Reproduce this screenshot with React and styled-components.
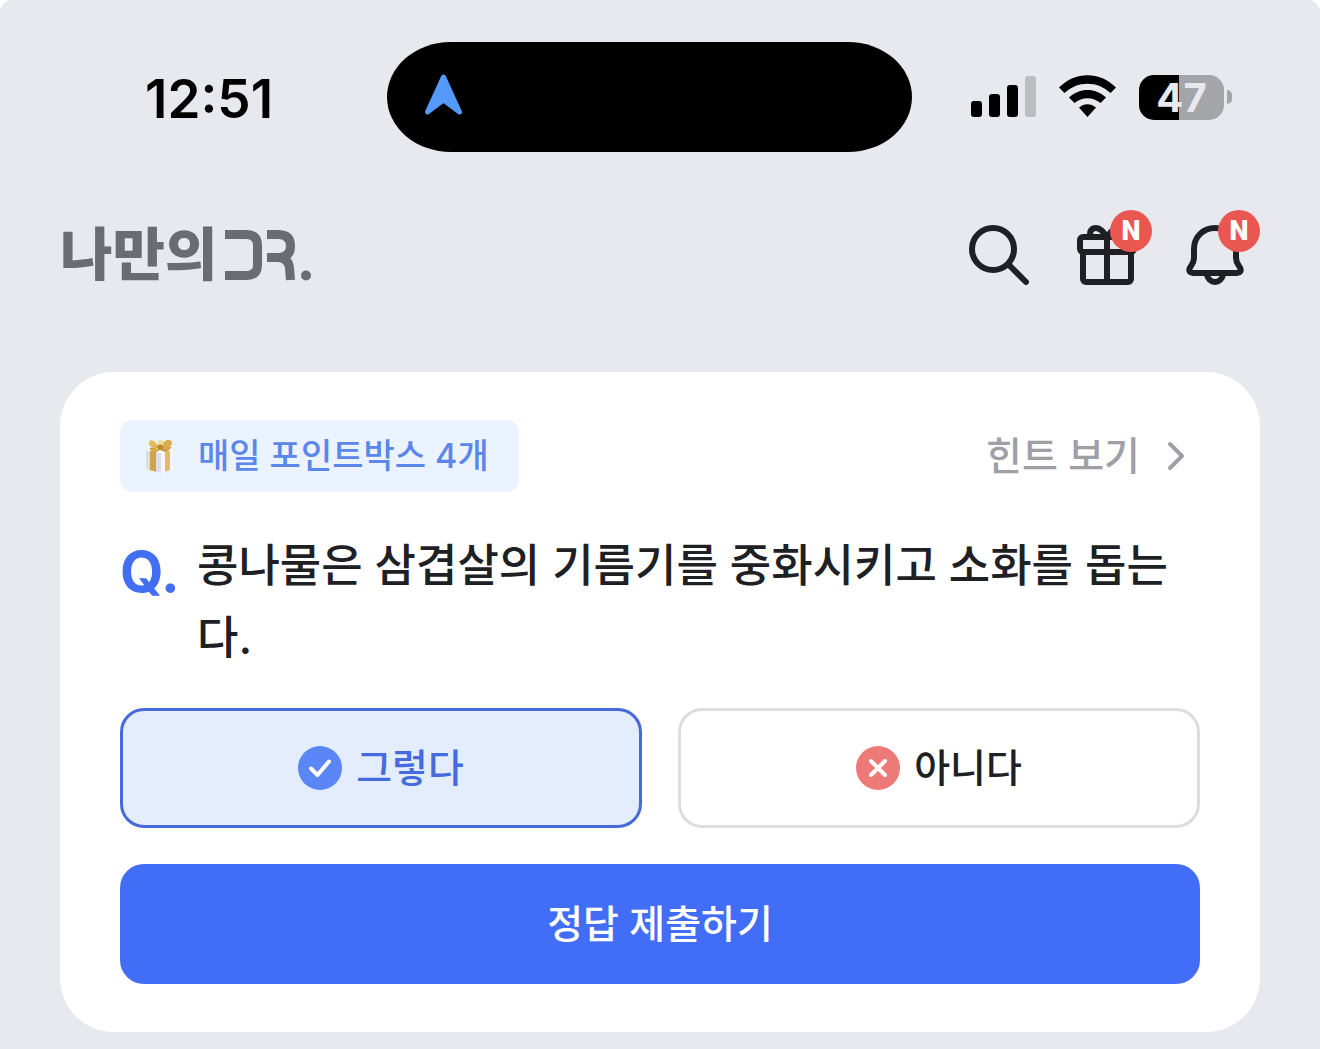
import React, { useState } from "react";
import styled, { createGlobalStyle } from "styled-components";

const GlobalStyle = createGlobalStyle`
  *, *::before, *::after { box-sizing: border-box; }
  body {
    margin: 0;
    background: #ffffff;
    color: #1f2024;
    font-family: Inter, "Noto Sans CJK KR", sans-serif;
    font-weight: 500;
  }
  button { font: inherit; cursor: pointer; }
  svg { display: block; flex: none; }
`;

const Screen = styled.div`
  min-height: 100vh;
  padding-bottom: 17px;
  background: #e8e9ee;
  border-radius: 12px 12px 0 0;
`;

const StatusBar = styled.div`
  display: grid;
  grid-template-columns: 1fr 525px 1fr;
  align-items: center;
  padding: 42px 88px 0 67px;
`;

const Clock = styled.time`
  padding: 3px 0 0 78px;
  color: #000000;
  font-size: 53px;
  font-weight: 600;
  line-height: 64px;
`;

const Island = styled.div`
  display: flex;
  align-items: center;
  height: 110px;
  padding-left: 36px;
  background: #000000;
  border-radius: 64px / 55px;
`;

const Indicators = styled.div`
  display: flex;
  align-items: center;
  justify-content: flex-end;
  gap: 23px;
`;

const Battery = styled.div`
  display: flex;
  align-items: center;
  gap: 3px;
`;

const BatteryBody = styled.div`
  width: 85px;
  height: 45px;
  border-radius: 15px;
  background: linear-gradient(
    to right,
    #000000 ${(p) => p.$level}%,
    #a4a5a9 ${(p) => p.$level}%
  );
  color: #e8e9ee;
  font-size: 40px;
  font-weight: 700;
  line-height: 45px;
  text-align: center;
`;

const BatteryTip = styled.div`
  width: 5px;
  height: 14px;
  border-radius: 0 5px 5px 0;
  background: #a4a5a9;
`;

const Header = styled.header`
  display: flex;
  align-items: center;
  justify-content: space-between;
  padding: 67px 69px 81px 60px;
`;

const Brand = styled.a`
  display: flex;
  align-items: center;
  gap: 8px;
  color: #6b6c72;
  font-size: 57px;
  font-weight: 900;
  line-height: 72px;
  text-decoration: none;
`;

const Actions = styled.nav`
  display: flex;
  gap: 36px;
`;

const IconButton = styled.button`
  position: relative;
  padding: 0;
  border: 0;
  background: none;
  color: #1f2024;
`;

const Badge = styled.span`
  position: absolute;
  top: -9px;
  right: -9px;
  width: 42px;
  height: 42px;
  border-radius: 50%;
  background: #ea5750;
  color: #ffffff;
  font-family: Roboto, sans-serif;
  font-size: 27px;
  font-weight: 900;
  line-height: 42px;
  text-align: center;
`;

const Card = styled.main`
  display: flex;
  flex-direction: column;
  gap: 36px;
  margin: 0 60px;
  padding: 48px 60px;
  border-radius: 54px;
  background: #ffffff;
`;

const CardTop = styled.div`
  display: flex;
  align-items: center;
  justify-content: space-between;
`;

const Chip = styled.div`
  display: flex;
  align-items: center;
  gap: 22px;
  padding: 0 30px 0 24px;
  border-radius: 12px;
  background: #eaf3ff;
  color: #5b86ea;
  font-size: 34px;
  line-height: 72px;
`;

const HintLink = styled.a`
  display: flex;
  align-items: center;
  gap: 12px;
  color: #9fa0a6;
  font-size: 39px;
  line-height: 72px;
  text-decoration: none;
`;

const Question = styled.div`
  display: grid;
  grid-template-columns: 60px 1fr;
  column-gap: 17px;
  padding-top: 2px;
  margin-bottom: -2px;
`;

const QuestionMark = styled.span`
  color: #416ef3;
  font-size: 56px;
  font-weight: 700;
  line-height: 84px;
`;

const QuestionText = styled.h1`
  margin: 0;
  font-size: 45px;
  font-weight: 500;
  line-height: 72px;
`;

const Choices = styled.div`
  display: grid;
  grid-template-columns: 1fr 1fr;
  gap: 36px;
`;

const Choice = styled.button`
  display: flex;
  align-items: center;
  justify-content: center;
  gap: 14px;
  height: 120px;
  border: 3px solid ${(p) => (p.$selected ? "#466bd9" : "#dcdde1")};
  border-radius: 24px;
  background: ${(p) => (p.$selected ? "#e3edfd" : "#ffffff")};
  color: ${(p) => (p.$selected ? "#466bdf" : "#1f2024")};
  font-size: 39px;
  line-height: 72px;
`;

const Submit = styled.button`
  height: 120px;
  border: 0;
  border-radius: 24px;
  background: #416df7;
  color: #ffffff;
  font-size: 39px;
  line-height: 72px;
`;

const strokeProps = {
  fill: "none",
  stroke: "currentColor",
  strokeWidth: 6,
  strokeLinecap: "round",
  strokeLinejoin: "round",
};

const LocationArrow = () => (
  <svg width="42" height="50" viewBox="0 0 42 50" aria-hidden="true">
    <path
      d="M20.500 5 L36.500 40 L20.500 28 L4.500 40 Z"
      fill="#5399f8"
      stroke="#5399f8"
      strokeWidth="5"
      strokeLinejoin="round"
    />
  </svg>
);

const Signal = () => (
  <svg width="65" height="44" viewBox="0 0 65 44" aria-hidden="true">
    <rect x="0" y="26" width="11" height="16" rx="3" />
    <rect x="18" y="19" width="11" height="23" rx="3" />
    <rect x="36" y="10" width="11" height="32" rx="3" />
    <rect x="54" y="1" width="11" height="41" rx="3" fill="#bcbdc1" />
  </svg>
);

const Wifi = () => (
  <svg width="57" height="44" viewBox="0 0 57 44" aria-hidden="true">
    <path d="M0 12.500 C16 -4 41 -4 57 12.500 L51.500 18 C38.500 5.500 18.500 5.500 5.500 18 Z" />
    <path d="M10 22.500 C20.500 12.500 36.500 12.500 47 22.500 L41.500 28 C34 21.500 23 21.500 15.500 28 Z" />
    <path d="M20 32.500 C25 28 32 28 37 32.500 L28.500 42 Z" />
  </svg>
);

const BrandMark = () => (
  <svg width="90" height="56" viewBox="0 0 90 56" aria-hidden="true">
    <g fill="none" stroke="currentColor" strokeWidth="9">
      <path d="M0 7.500 H22 Q32.500 8 32.500 18 V38 Q32.500 48 22 48.500 H0" />
      <path d="M42 7.500 H54 Q65.500 8 65.500 19 Q65.500 30 54 30.500 H42" />
      <path d="M53 30.500 Q63.500 31 64.500 41 L65.500 53" />
    </g>
    <circle cx="81" cy="48.500" r="5" fill="currentColor" />
  </svg>
);

const SearchIcon = () => (
  <svg width="72" height="72" viewBox="0 0 72 72" aria-hidden="true" {...strokeProps}>
    <circle cx="30" cy="30" r="21" />
    <path d="M45.500 45.500 L63 63" />
  </svg>
);

const GiftIcon = () => (
  <svg width="72" height="72" viewBox="0 0 72 72" aria-hidden="true" {...strokeProps}>
    <rect x="9" y="18" width="54" height="15" rx="3" />
    <rect x="12" y="33" width="48" height="30" rx="3" />
    <path d="M36 18 V63" />
    <path d="M19.500 17 C18 12 21 9 25 9 C30 9 33 14 36 18 C39 14 42 9 47 9 C51 9 54 12 52.500 17" />
  </svg>
);

const BellIcon = () => (
  <svg width="72" height="72" viewBox="0 0 72 72" aria-hidden="true" {...strokeProps}>
    <path d="M36 9 C24 9 15 18 15 30 V39 C15 44 12 46.500 10.800 49 C9.500 52 11 54 14 54 H58 C61 54 62.500 52 61.200 49 C60 46.500 57 44 57 39 V30 C57 18 48 9 36 9 Z" />
    <path d="M27.500 55 C29 60 32 63 36 63 C40 63 43 60 44.500 55" />
  </svg>
);

const PresentIcon = () => (
  <svg width="32" height="36" viewBox="0 0 32 36" aria-hidden="true">
    <path d="M2 12 L17 15 V35 L2 31 Z" fill="#dddce8" />
    <path d="M17 15 L29 12 V31 L17 35 Z" fill="#f7f6fb" />
    <path d="M2 12 L15 9 L29 12 L17 15 Z" fill="#ffffff" />
    <path d="M6 13 L12 14 V33.700 L6 32 Z" fill="#cfa548" />
    <path d="M21 14 L26 13 V32 L21 33.700 Z" fill="#dfbd62" />
    <path d="M7 13 L19 10 L25 13 L21 14 L16 12 L12 14 Z" fill="#c8983a" />
    <path d="M15 9 C10 0 4 1 5 6 C6 10 11 11 15 9 Z" fill="#e4bd60" />
    <path d="M17 9 C20 0 28 0 28 5 C28 9 22 11 17 9 Z" fill="#dcae49" />
    <path d="M15 8 C12 2 15 1 18 2 C21 3 20 7 17 9 Z" fill="#f3dc9a" />
    <path d="M15 9 L5 10 L8 14 Z M17 9 L28 9 L24 13 Z" fill="#d3a746" />
    <ellipse cx="16" cy="9" rx="3" ry="2.500" fill="#bb8a2f" />
  </svg>
);

const Chevron = () => (
  <svg width="48" height="48" viewBox="0 0 48 48" aria-hidden="true" {...strokeProps} strokeWidth={4}>
    <path d="M18 12 L30 24 L18 36" />
  </svg>
);

const CheckMark = () => (
  <svg width="44" height="44" viewBox="0 0 44 44" aria-hidden="true">
    <circle cx="22" cy="22" r="22" fill="#5b86f7" />
    <path d="M13 22.500 L19.500 29 L31 15.500" {...strokeProps} stroke="#ffffff" strokeWidth="4" />
  </svg>
);

const CrossMark = () => (
  <svg width="44" height="44" viewBox="0 0 44 44" aria-hidden="true">
    <circle cx="22" cy="22" r="22" fill="#ee7a77" />
    <path d="M15 15 L29 29 M29 15 L15 29" {...strokeProps} stroke="#ffffff" strokeWidth="4" />
  </svg>
);

export default function App() {
  const [answer, setAnswer] = useState("yes");

  return (
    <>
      <GlobalStyle />
      <Screen>
        <StatusBar>
          <Clock>12:51</Clock>
          <Island>
            <LocationArrow />
          </Island>
          <Indicators>
            <Signal />
            <Wifi />
            <Battery>
              <BatteryBody $level={47}>47</BatteryBody>
              <BatteryTip />
            </Battery>
          </Indicators>
        </StatusBar>

        <Header>
          <Brand href="#home">
            나만의
            <BrandMark />
          </Brand>
          <Actions>
            <IconButton type="button" aria-label="검색">
              <SearchIcon />
            </IconButton>
            <IconButton type="button" aria-label="선물">
              <GiftIcon />
              <Badge>N</Badge>
            </IconButton>
            <IconButton type="button" aria-label="알림">
              <BellIcon />
              <Badge>N</Badge>
            </IconButton>
          </Actions>
        </Header>

        <Card>
          <CardTop>
            <Chip>
              <PresentIcon />
              매일 포인트박스 4개
            </Chip>
            <HintLink href="#hint">
              힌트 보기
              <Chevron />
            </HintLink>
          </CardTop>

          <Question>
            <QuestionMark>Q.</QuestionMark>
            <QuestionText>
              콩나물은 삼겹살의 기름기를 중화시키고 소화를 돕는다.
            </QuestionText>
          </Question>

          <Choices>
            <Choice
              type="button"
              $selected={answer === "yes"}
              aria-pressed={answer === "yes"}
              onClick={() => setAnswer("yes")}
            >
              <CheckMark />
              그렇다
            </Choice>
            <Choice
              type="button"
              $selected={answer === "no"}
              aria-pressed={answer === "no"}
              onClick={() => setAnswer("no")}
            >
              <CrossMark />
              아니다
            </Choice>
          </Choices>

          <Submit type="button">정답 제출하기</Submit>
        </Card>
      </Screen>
    </>
  );
}
